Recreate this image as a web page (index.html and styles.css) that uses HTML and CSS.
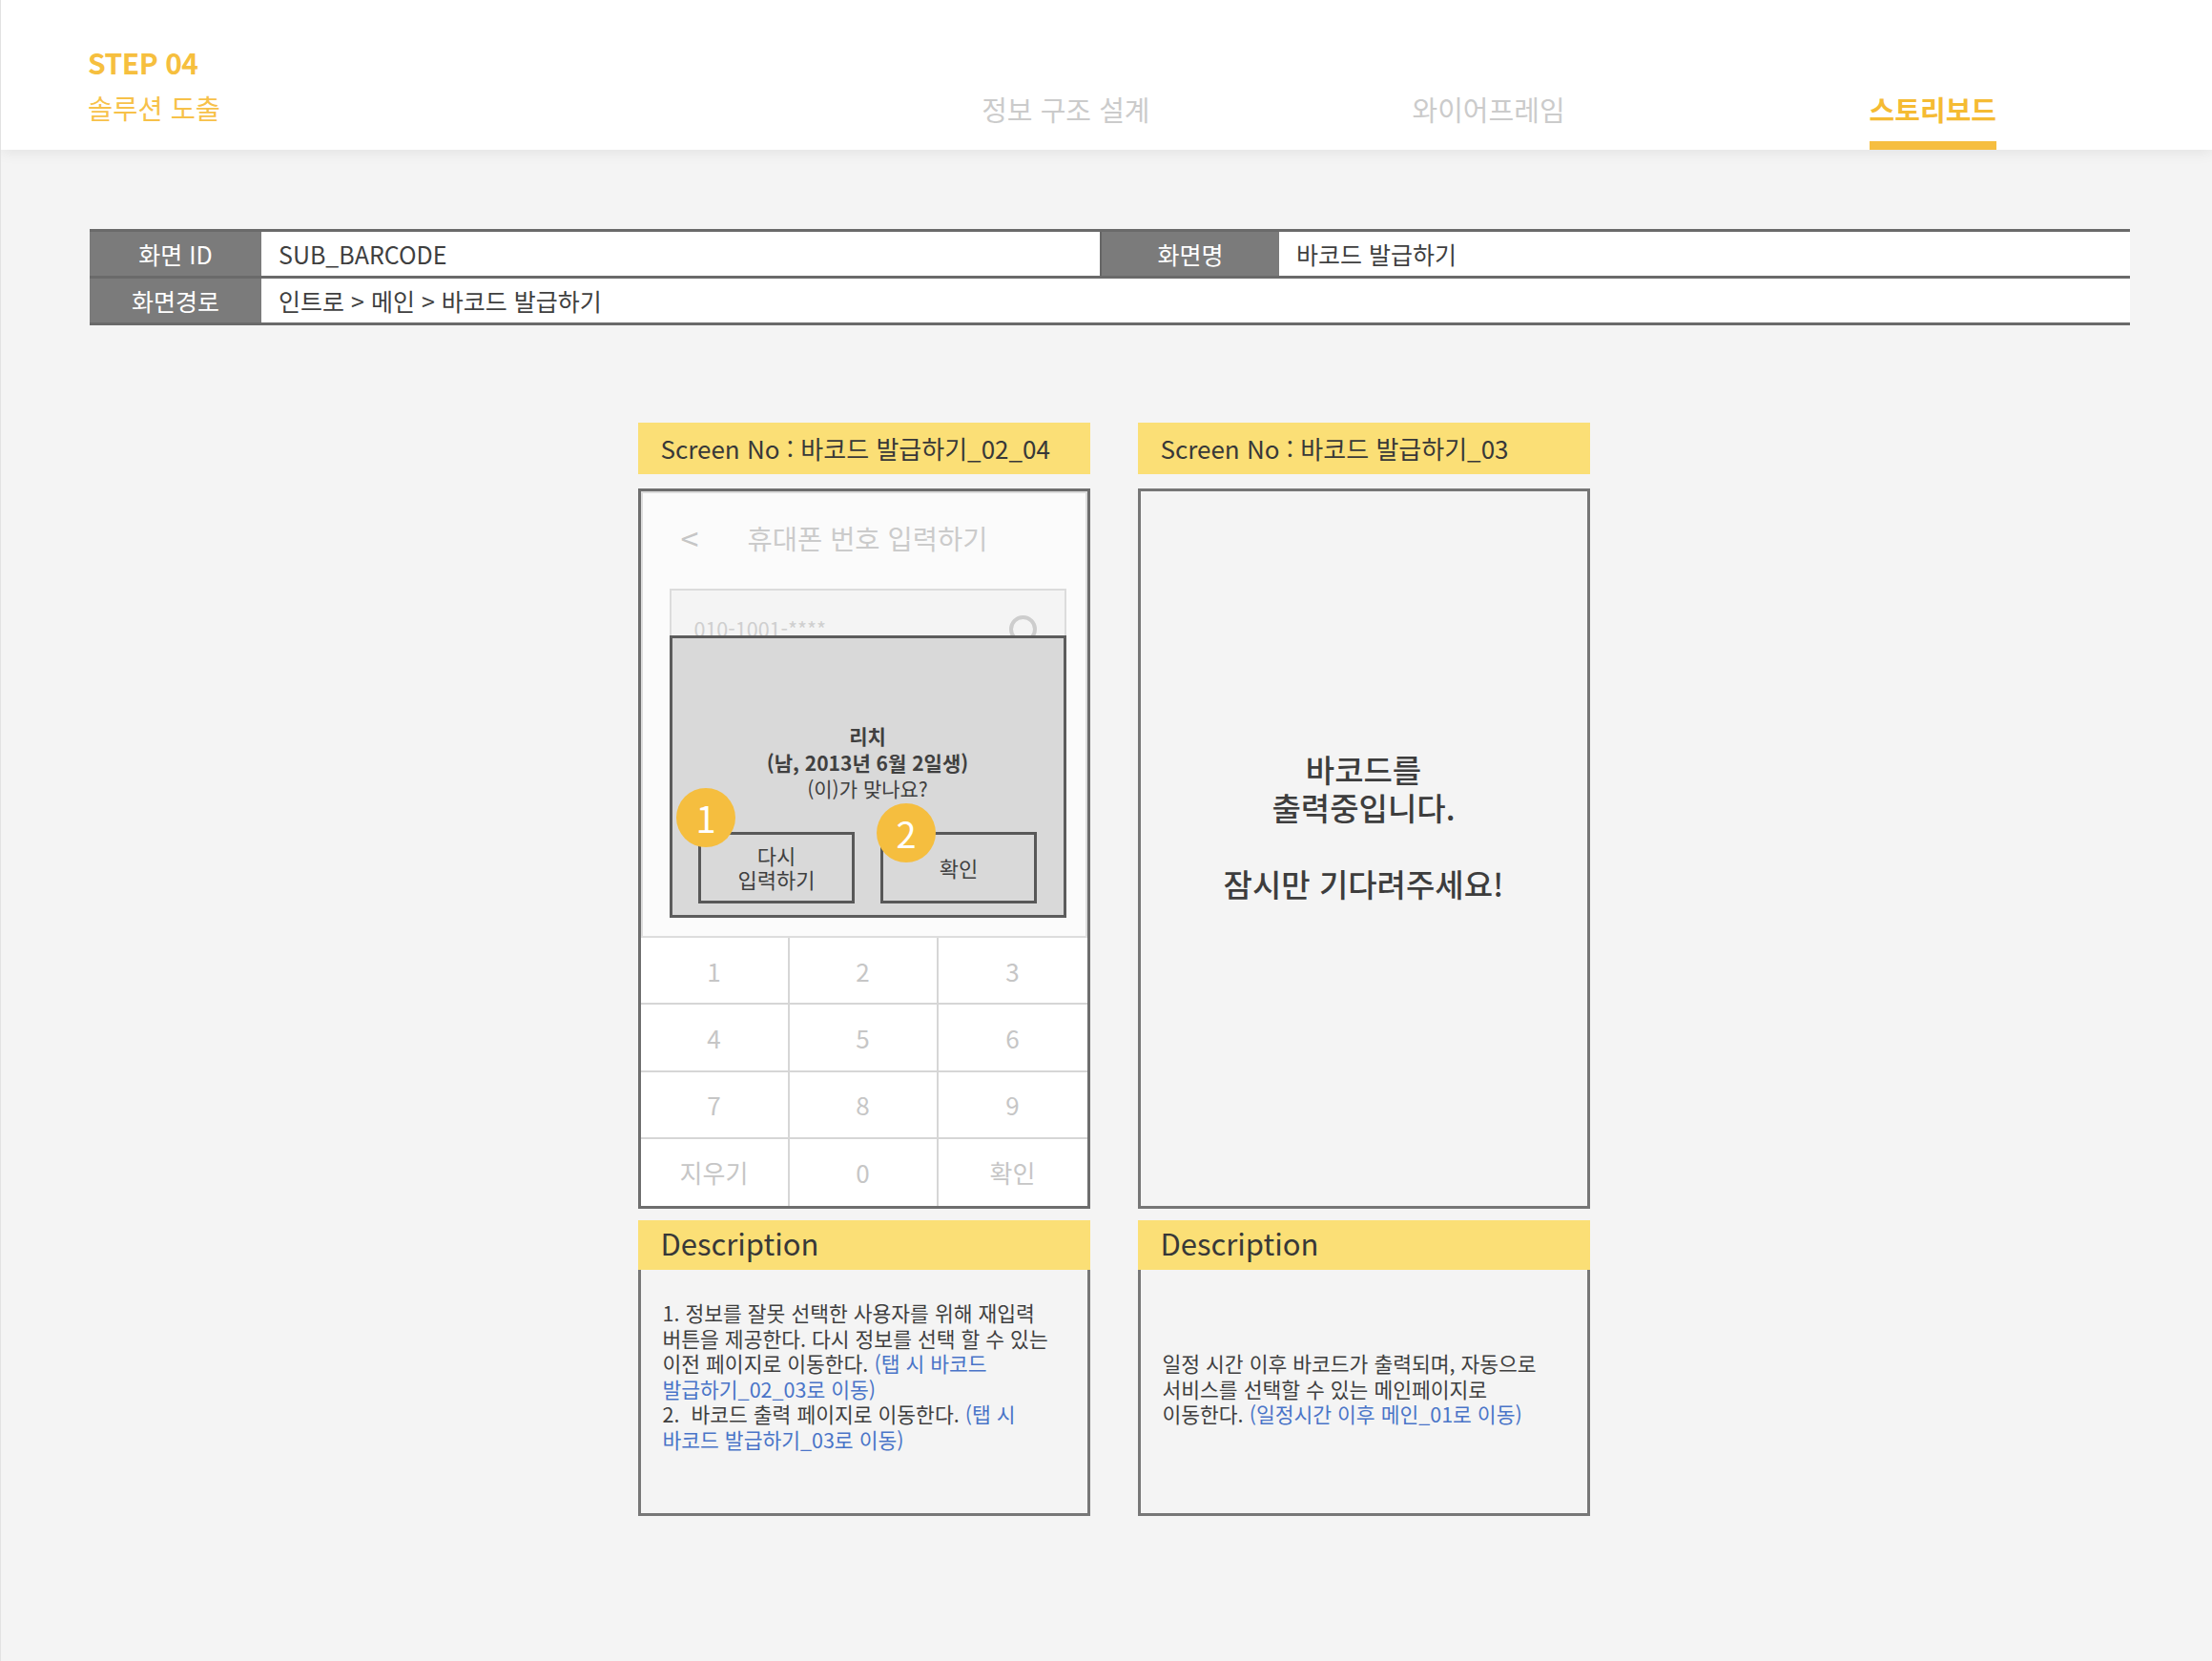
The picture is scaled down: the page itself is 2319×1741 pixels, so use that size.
FILE: index.html
```html
<!DOCTYPE html>
<html lang="ko">
<head>
  <meta charset="UTF-8" />
  <meta name="viewport" content="width=device-width, initial-scale=1.0" />
  <title>STEP 04 - 스토리보드</title>
  <link rel="stylesheet" href="styles.css">
</head>
<body>

<div class="top">
  <div class="brand">
    <div class="step">STEP 04</div>
    <div class="step-name">솔루션 도출</div>
  </div>
  <nav class="nav">
    <div class="nav-item n1">정보 구조 설계</div>
    <div class="nav-item n2">와이어프레임</div>
    <div class="nav-item n3 active">스토리보드</div>
  </nav>
</div>

<div class="info">
  <div class="info-row r1">
    <div class="info-label">화면 ID</div>
    <div class="info-value">SUB_BARCODE</div>
    <div class="info-label l2">화면명</div>
    <div class="info-value">바코드 발급하기</div>
  </div>
  <div class="info-row r2">
    <div class="info-label">화면경로</div>
    <div class="info-value">인트로 &gt; 메인 &gt; 바코드 발급하기</div>
  </div>
</div>

<div class="cards">
  <div class="card">
    <div class="card-title">Screen No : 바코드 발급하기_02_04</div>
    <div class="frame">
      <div class="phone-top">
        <div class="phone-head">
          <span class="back">&lt;</span>
          <span class="phone-title">휴대폰 번호 입력하기</span>
        </div>
        <div class="phone-input">
          <span class="placeholder">010-1001-****</span>
          <span class="ring"></span>
        </div>
        <div class="modal">
          <div class="modal-text">
            <b>리치</b><br>
            <b>(남, 2013년 6월 2일생)</b><br>
            (이)가 맞나요?
          </div>
          <div class="modal-btns">
            <div class="mbtn">다시<br>입력하기<span class="badge b1">1</span></div>
            <div class="mbtn">확인<span class="badge b2">2</span></div>
          </div>
        </div>
      </div>
      <div class="keypad">
        <div class="key">1</div><div class="key">2</div><div class="key">3</div>
        <div class="key">4</div><div class="key">5</div><div class="key">6</div>
        <div class="key">7</div><div class="key">8</div><div class="key">9</div>
        <div class="key">지우기</div><div class="key">0</div><div class="key">확인</div>
      </div>
    </div>
    <div class="desc-title">Description</div>
    <div class="desc d1">
      1. 정보를 잘못 선택한 사용자를 위해 재입력<br>
      버튼을 제공한다. 다시 정보를 선택 할 수 있는<br>
      이전 페이지로 이동한다. <span class="link">(탭 시 바코드<br>
      발급하기_02_03로 이동)</span><br>
      2.&nbsp; 바코드 출력 페이지로 이동한다. <span class="link">(탭 시<br>
      바코드 발급하기_03로 이동)</span>
    </div>
  </div>

  <div class="card">
    <div class="card-title">Screen No : 바코드 발급하기_03</div>
    <div class="frame plain">
      <div class="wait">바코드를<br>출력중입니다.<br><br>잠시만 기다려주세요!</div>
    </div>
    <div class="desc-title">Description</div>
    <div class="desc d2">
      일정 시간 이후 바코드가 출력되며, 자동으로<br>
      서비스를 선택할 수 있는 메인페이지로<br>
      이동한다. <span class="link">(일정시간 이후 메인_01로 이동)</span>
    </div>
  </div>
</div>

</body>
</html>
```

FILE: styles.css
```css
body {
  margin: 0;
  padding: 0;
  min-height: 1741px;
  background-color: #f4f4f4;
  border-left: 1px solid #e2e2e2;
  font-family: "Noto Sans CJK KR", "Noto Sans", sans-serif;
  color: #3c3c3c;
}
.top {
  display: flex;
  height: 157px;
  background-color: #fff;
  box-shadow: 0 3px 14px rgba(0, 0, 0, 0.07);
  padding-left: 91px;
  box-sizing: border-box;
}
.brand {
  padding-top: 48px;
}
.step {
  font-size: 30px;
  line-height: 34px;
  font-weight: bold;
  color: #f6bf3e;
  letter-spacing: -0.5px;
}
.step-name {
  margin-top: 14px;
  font-size: 28.5px;
  line-height: 34px;
  color: #f7c149;
}
.nav {
  display: flex;
  margin-left: auto;
  margin-right: 226px;
}
.nav-item {
  padding-top: 97px;
  font-size: 29px;
  line-height: 34px;
  color: #cbcbcb;
  box-sizing: border-box;
  height: 157px;
  text-align: center;
}
.n1 {
  margin-right: 275px;
}
.n2 {
  margin-right: 319px;
}
.active {
  color: #f5bb33;
  font-weight: bold;
  border-bottom: 9px solid #f6be40;
}

.info {
  margin: 83px 86px 0 93px;
  border-top: 3px solid #6a6a6a;
}
.info-row {
  display: grid;
  height: 46px;
  border-bottom: 3px solid #6a6a6a;
  font-size: 25px;
}
.r1 {
  grid-template-columns: 180px 879px 188px 1fr;
}
.r2 {
  grid-template-columns: 180px 1fr;
}
.info-label {
  background-color: #7b7b7b;
  color: #fff;
  text-align: center;
  line-height: 46px;
}
.l2 {
  border-left: 2px solid #666;
}
.info-value {
  background-color: #fff;
  padding-left: 18px;
  line-height: 46px;
  color: #3f3f3f;
}

.cards {
  display: flex;
  justify-content: center;
  gap: 50px;
  margin-top: 102px;
  padding-left: 15px;
}
.card {
  width: 474px;
}
.card-title {
  height: 54px;
  line-height: 54px;
  padding-left: 24px;
  background-color: #fbdf76;
  font-size: 26px;
  color: #383838;
}
.frame {
  margin-top: 15px;
  height: 755px;
  border: 3px solid #6e6e6e;
  box-sizing: border-box;
  background-color: #fff;
}
.phone-top {
  height: 468px;
  box-sizing: border-box;
  border: 2px solid #dddddd;
  background-color: #fbfbfb;
  padding: 0 20px 0 28px;
}
.phone-head {
  display: flex;
  align-items: center;
  height: 36px;
  padding: 28px 0 0 12px;
  font-size: 28.5px;
  color: #cbcbcb;
}
.back {
  display: inline-block;
  width: 70px;
  font-size: 34px;
  color: #c6c6c6;
}
.phone-input {
  display: flex;
  justify-content: space-between;
  margin-top: 36px;
  height: 49px;
  box-sizing: border-box;
  border: 2px solid #dcdcdc;
  border-bottom: none;
  background-color: #f4f4f4;
  padding: 26px 29px 0 24px;
  overflow: hidden;
}
.placeholder {
  font-size: 21.5px;
  line-height: 27px;
  color: #cfcfcf;
}
.ring {
  width: 29px;
  height: 29px;
  margin-top: 0;
  border: 4px solid #cdcdcd;
  border-radius: 50%;
  box-sizing: border-box;
}
.modal {
  height: 296px;
  box-sizing: border-box;
  border: 3px solid #5c5c5c;
  background-color: #d9d9d9;
  padding-top: 89px;
}
.modal-text {
  text-align: center;
  font-size: 21px;
  line-height: 27.5px;
  color: #404040;
}
.modal-btns {
  display: flex;
  justify-content: center;
  gap: 27px;
  margin-top: 31px;
}
.mbtn {
  position: relative;
  display: flex;
  align-items: center;
  justify-content: center;
  width: 164px;
  height: 75px;
  box-sizing: border-box;
  border: 3px solid #585858;
  text-align: center;
  font-size: 22px;
  line-height: 25px;
  color: #404040;
}
.badge {
  position: absolute;
  width: 62px;
  height: 62px;
  border-radius: 50%;
  background-color: #f5be3f;
  color: #fff;
  font-size: 38px;
  line-height: 62px;
  text-align: center;
}
.b1 {
  left: -26px;
  top: -49px;
}
.b2 {
  left: -7px;
  top: -33px;
}
.keypad {
  display: grid;
  grid-template-columns: repeat(3, 1fr);
  grid-template-rows: repeat(4, 1fr);
  height: 281px;
}
.key {
  display: flex;
  align-items: center;
  justify-content: center;
  border-right: 2px solid #d6d6d6;
  border-bottom: 2px solid #d6d6d6;
  font-size: 26px;
  color: #c6c6c6;
}
.key:nth-child(3n) {
  border-right: none;
}
.key:nth-child(n+10) {
  border-bottom: none;
}
.plain {
  background-color: #f4f4f4;
  border-color: #767676;
}
.wait {
  padding-top: 271px;
  text-align: center;
  font-size: 33px;
  line-height: 40px;
  font-weight: 500;
  color: #3d3d3d;
}
.desc-title {
  margin-top: 12px;
  height: 52px;
  line-height: 48px;
  padding-left: 24px;
  background-color: #fbdf76;
  font-size: 31px;
  color: #383838;
}
.desc {
  height: 258px;
  box-sizing: border-box;
  border: 3px solid #777;
  border-top: none;
  padding-left: 23px;
  font-size: 21.5px;
  line-height: 26.5px;
  color: #3f3f3f;
}
.d1 {
  padding-top: 32px;
}
.d2 {
  padding-top: 85px;
}
.link {
  color: #4a74c8;
}
```
